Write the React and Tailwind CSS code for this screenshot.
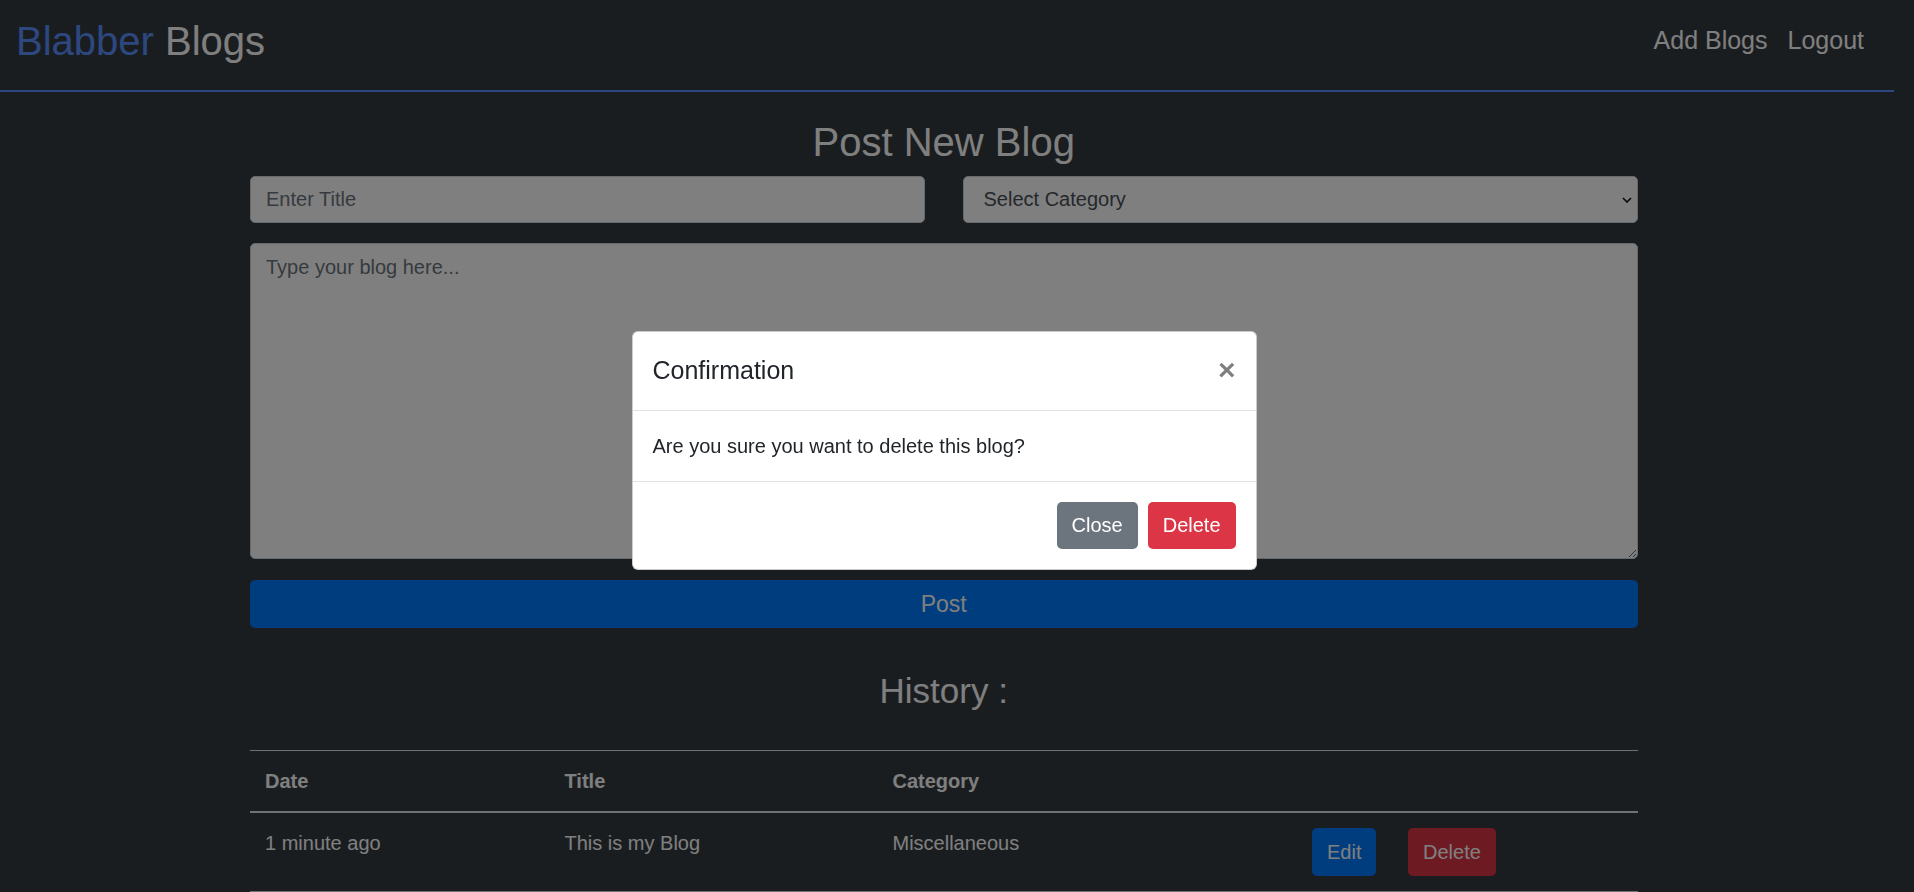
export default function App() {
  return (
    <div className="min-h-screen bg-[#343a40] text-white font-['Liberation_Sans',Arial,sans-serif]">
      <div className="pr-[20px]">
        <nav className="h-[92px] pb-[9px] flex items-center justify-between border-b-2 border-[#5a90ff] pl-[16px] pr-[20px]">
          <div className="text-[40px] leading-none">
            <span className="text-[#5a90ff]">Blabber</span> Blogs
          </div>
          <div className="flex text-[25px] leading-none">
            <a className="px-[10px]">Add Blogs</a>
            <a className="px-[10px]">Logout</a>
          </div>
        </nav>

        <main className="ml-[250px] w-[1387.5px]">
          <h2 className="mt-[26px] mb-[9.5px] text-center text-[40px] leading-[1.2] font-medium">
            Post New Blog
          </h2>
          <div className="grid grid-cols-2 gap-[37.5px]">
            <input
              placeholder="Enter Title"
              className="w-full min-w-0 h-[47.5px] px-[15px] border border-[#ced4da] rounded-[5px] bg-white text-[20px] text-[#495057] placeholder:text-[#6c757d] outline-none"
            />
            <div className="relative min-w-0">
              <select className="appearance-none w-full h-[47.5px] pl-[20px] pr-[30px] border border-[#ced4da] rounded-[5px] bg-white text-[20px] text-[#495057] outline-none">
                <option>Select Category</option>
                <option>Miscellaneous</option>
              </select>
              <svg
                className="absolute right-[6px] top-[21px] pointer-events-none"
                width="10"
                height="6"
                viewBox="0 0 10 6"
                fill="none"
              >
                <path d="M1 1L5 5L9 1" stroke="#111" strokeWidth="1.6" />
              </svg>
            </div>
          </div>
          <textarea
            placeholder="Type your blog here..."
            className="block mt-[20px] w-full h-[316px] px-[15px] py-[7.5px] border border-[#ced4da] rounded-[5px] bg-white text-[20px] leading-[1.5] text-[#495057] placeholder:text-[#6c757d] outline-none"
          />
          <button className="block mt-[21px] w-full h-[47.5px] bg-[#007bff] rounded-[5px] text-[23px] text-white">
            Post
          </button>

          <h3 className="mt-[42.5px] text-center text-[35px] leading-[1.2] font-medium">History :</h3>

          <table className="mt-[38px] w-full table-fixed border-collapse text-[20px] leading-[1.5]">
            <colgroup>
              <col className="w-[299.5px]" />
              <col className="w-[328px]" />
              <col className="w-[419.5px]" />
              <col className="w-[96px]" />
              <col />
            </colgroup>
            <thead>
              <tr className="border-t border-[#dee2e6] border-b-2">
                <th className="p-[15px] text-left font-bold">Date</th>
                <th className="p-[15px] text-left font-bold">Title</th>
                <th className="p-[15px] text-left font-bold">Category</th>
                <th className="p-[15px]"></th>
                <th className="p-[15px]"></th>
              </tr>
            </thead>
            <tbody>
              <tr className="border-b border-[#dee2e6]">
                <td className="p-[15px] align-top">1 minute ago</td>
                <td className="p-[15px] align-top">This is my Blog</td>
                <td className="p-[15px] align-top">Miscellaneous</td>
                <td className="p-[15px] align-top">
                  <button className="h-[47.5px] px-[15px] bg-[#007bff] rounded-[5px] text-white">Edit</button>
                </td>
                <td className="p-[15px] align-top">
                  <button className="h-[47.5px] px-[15px] bg-[#dc3545] rounded-[5px] text-white">Delete</button>
                </td>
              </tr>
            </tbody>
          </table>
        </main>
      </div>

      <div className="fixed inset-0 z-50 bg-black/50 flex items-center justify-center pr-[26px] pt-[9px]">
        <div className="w-[625px] bg-white rounded-[6px] border border-black/20 text-[#212529]">
          <div className="flex items-start p-[20px] border-b border-[#dee2e6]">
            <h5 className="text-[25px] leading-[1.5] font-medium">Confirmation</h5>
            <button className="ml-auto -m-[20px] p-[20px] pt-[23px] text-[30px] font-bold leading-none text-black opacity-50">
              ×
            </button>
          </div>
          <div className="p-[20px] text-[20px] leading-[1.5]">Are you sure you want to delete this blog?</div>
          <div className="flex justify-end items-center p-[15px] border-t border-[#dee2e6]">
            <button className="m-[5px] h-[47.5px] px-[15px] bg-[#6c757d] rounded-[5px] text-[20px] text-white">
              Close
            </button>
            <button className="m-[5px] h-[47.5px] px-[15px] bg-[#dc3545] rounded-[5px] text-[20px] text-white">
              Delete
            </button>
          </div>
        </div>
      </div>
    </div>
  );
}
